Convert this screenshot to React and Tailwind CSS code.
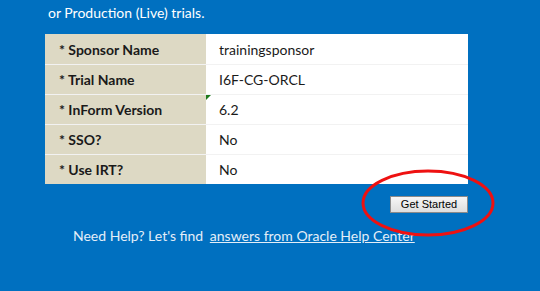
const rows = [
  { label: "* Sponsor Name", value: "trainingsponsor" },
  { label: "* Trial Name", value: "I6F-CG-ORCL" },
  { label: "* InForm Version", value: "6.2", flag: true },
  { label: "* SSO?", value: "No" },
  { label: "* Use IRT?", value: "No" },
];

const App = () => {
  return (
    <div
      className="relative w-[540px] h-[291px] overflow-hidden bg-[#0070c0] text-[14px]"
      style={{ fontFamily: "Lato, 'Open Sans', sans-serif" }}
    >
      <div className="pl-[48px] pt-[4px] leading-[18px] text-white">
        or Production (Live) trials.
      </div>

      <div className="ml-[45px] mt-[12px] w-[423px] flex flex-col">
        {rows.map((r, i) => (
          <div
            key={r.label}
            className={`flex h-[30px] ${i > 0 ? "border-t border-[#f2f2f2]" : ""}`}
          >
            <div className="w-[161px] bg-[#ddd9c4] pl-[14px] flex items-center font-bold text-[#1a1a1a]">
              {r.label}
            </div>
            <div className="relative flex-1 bg-white pl-[13px] flex items-center text-[#1a1a1a]">
              {r.flag && (
                <span className="absolute left-0 top-0 w-0 h-0 border-t-[5px] border-t-[#1e7a1e] border-r-[5px] border-r-transparent" />
              )}
              {r.value}
            </div>
          </div>
        ))}
      </div>

      <div className="w-[468px] flex justify-end mt-[12px]">
        <button
          className="w-[78px] h-[17px] border border-[#8a8a8a] bg-gradient-to-b from-[#f6f6f6] to-[#dedede] text-[11px] leading-[15px] text-black"
          style={{ fontFamily: "'Liberation Sans', Arial, sans-serif" }}
        >
          Get Started
        </button>
      </div>

      <div className="pl-[73px] mt-[14px] text-[#e4eef8] leading-[18px]">
        Need Help? Let's find{" "}
        <a className="underline ml-[3px] text-[#e4eef8]">answers from Oracle Help Center</a>
      </div>

      <svg
        className="absolute left-0 top-0 pointer-events-none"
        width="540"
        height="291"
      >
        <ellipse
          cx="428"
          cy="203"
          rx="65"
          ry="32"
          fill="none"
          stroke="#ee1111"
          strokeWidth="3"
        />
      </svg>
    </div>
  );
};

export default App;
